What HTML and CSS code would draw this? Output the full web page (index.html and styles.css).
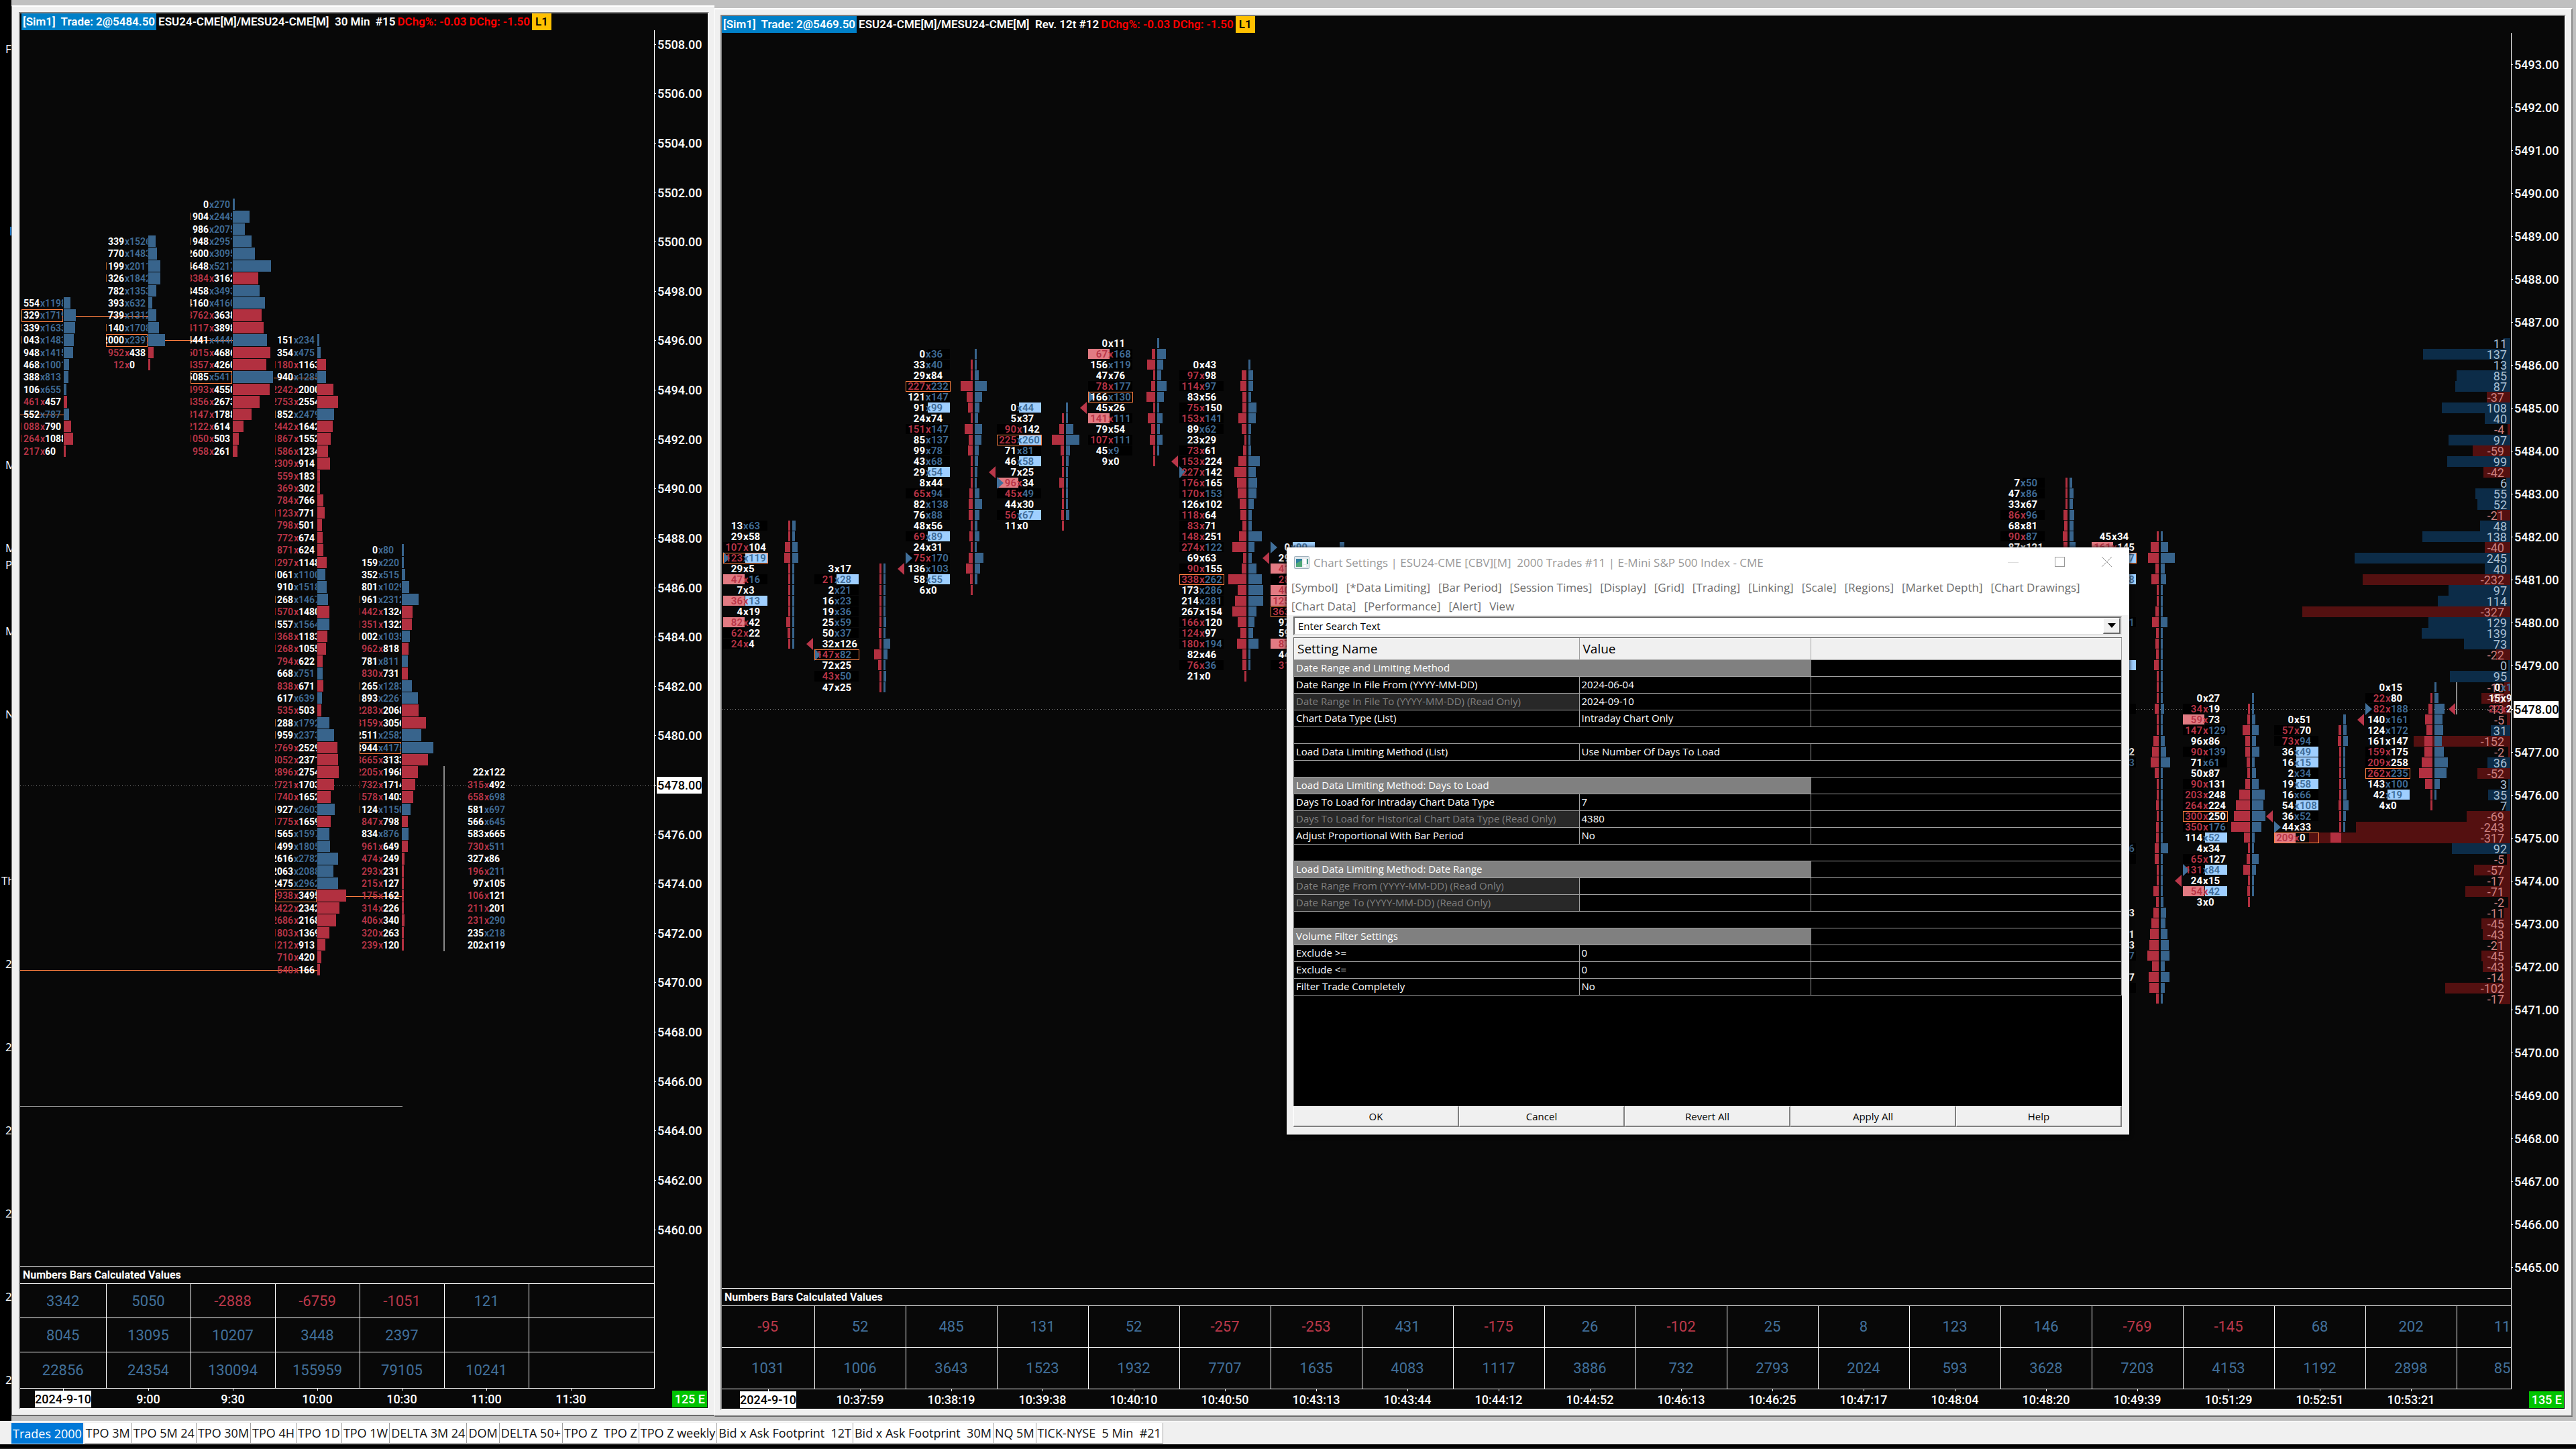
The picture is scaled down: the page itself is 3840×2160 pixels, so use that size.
FILE: index.html
```html
<!DOCTYPE html>
<html lang="en">
<head>
  <meta charset="UTF-8" />
  <title>Trades 2000</title>
  <link rel="stylesheet" href="styles.css">
</head>
<body>
  <main class="workspace">
    <ul class="desktop-strip">
      <li>F</li><li></li><li class="marked"></li><li></li><li></li>
      <li>M</li><li>M<br>P</li><li>M</li><li>N</li><li></li><li class="wide-label">Th</li>
      <li>2</li><li>2</li><li>2</li><li>2</li><li>2</li><li>2</li>
    </ul>

    <section class="chart-window left-window">
      <div class="chart">
        <header class="chart-header">
          <span class="position">[Sim1]&nbsp; Trade: 2@5484.50</span>
          <span class="symbol">ESU24-CME[M]/MESU24-CME[M]&nbsp; 30 Min&nbsp; #15</span>
          <span class="change">DChg%: -0.03 DChg: -1.50</span>
          <span class="level">L1</span>
        </header>
        <svg class="plot narrow" id="plot30"></svg>
        <div class="values">
          <h2>Numbers Bars Calculated Values</h2>
          <table id="values30"></table>
        </div>
        <footer class="times" id="times30"></footer>
      </div>
    </section>

    <section class="chart-window right-window">
      <div class="chart">
        <header class="chart-header">
          <span class="position">[Sim1]&nbsp; Trade: 2@5469.50</span>
          <span class="symbol">ESU24-CME[M]/MESU24-CME[M]&nbsp; Rev. 12t #12</span>
          <span class="change">DChg%: -0.03 DChg: -1.50</span>
          <span class="level">L1</span>
        </header>
        <svg class="plot wide" id="plot12t"></svg>
        <div class="values">
          <h2>Numbers Bars Calculated Values</h2>
          <table id="values12t"></table>
        </div>
        <footer class="times" id="times12t"></footer>
      </div>
    </section>
  </main>

  <nav class="tabs">
    <button class="active">Trades 2000</button>
    <button>TPO 3M</button>
    <button>TPO 5M 24</button>
    <button>TPO 30M</button>
    <button>TPO 4H</button>
    <button>TPO 1D</button>
    <button>TPO 1W</button>
    <button>DELTA 3M 24</button>
    <button>DOM</button>
    <button>DELTA 50+</button>
    <button>TPO Z&nbsp; TPO Z</button>
    <button>TPO Z weekly</button>
    <button>Bid x Ask Footprint&nbsp; 12T</button>
    <button>Bid x Ask Footprint&nbsp; 30M</button>
    <button>NQ 5M</button>
    <button>TICK-NYSE&nbsp; 5 Min&nbsp; #21</button>
  </nav>
  <div class="taskbar"></div>

  <section class="dialog" role="dialog" aria-labelledby="dialogTitle">
    <header class="dialog-title">
      <svg class="app-icon" viewBox="0 0 23 19" width="23" height="19">
        <rect x="0.5" y="0.5" width="22" height="18" rx="1" fill="#e4eaee" stroke="#9fb0bc" />
        <rect x="3" y="4" width="9" height="12" fill="#2e7fa0" />
        <path d="M3 16V11L12 6V16Z" fill="#4fa877" />
        <rect x="14" y="4" width="4" height="8" fill="#fff" />
        <rect x="14" y="13" width="4" height="3" fill="#fff" />
        <rect x="19" y="4" width="2" height="8" fill="#4a9b8a" />
      </svg>
      <h1 id="dialogTitle">Chart Settings | ESU24-CME [CBV][M]&nbsp; 2000 Trades #11 | E-Mini S&amp;P 500 Index - CME</h1>
      <div class="window-buttons">
        <button aria-label="Minimize"><svg width="16" height="16"><path d="M0 8.5H16" stroke="#ddd" /></svg></button>
        <button aria-label="Maximize"><svg width="16" height="16"><rect x="0.5" y="0.5" width="14" height="14" fill="none" stroke="#999" /></svg></button>
        <button aria-label="Close"><svg width="16" height="16"><path d="M0 0L15 15M15 0L0 15" stroke="#999" /></svg></button>
      </div>
    </header>
    <nav class="menu">
      <a href="#">[Symbol]</a>
      <a href="#">[*Data Limiting]</a>
      <a href="#">[Bar Period]</a>
      <a href="#">[Session Times]</a>
      <a href="#">[Display]</a>
      <a href="#">[Grid]</a>
      <a href="#">[Trading]</a>
      <a href="#">[Linking]</a>
      <a href="#">[Scale]</a>
      <a href="#">[Regions]</a>
      <a href="#">[Market Depth]</a>
      <a href="#">[Chart Drawings]</a>
      <a href="#">[Chart Data]</a>
      <a href="#">[Performance]</a>
      <a href="#">[Alert]</a>
      <a href="#">View</a>
    </nav>
    <div class="dialog-body">
      <div class="search">
        <select aria-label="Search settings">
          <option>Enter Search Text</option>
        </select>
        <span class="arrow"><svg width="12" height="7"><path d="M0 0H12L6 7Z" /></svg></span>
      </div>
      <div class="settings">
        <table>
          <colgroup><col class="name-col"><col class="value-col"><col></colgroup>
          <thead>
            <tr><th>Setting Name</th><th>Value</th><th></th></tr>
          </thead>
          <tbody>
            <tr class="group"><td colspan="2">Date Range and Limiting Method</td><td></td></tr>
            <tr><td>Date Range In File From (YYYY-MM-DD)</td><td>2024-06-04</td><td></td></tr>
            <tr class="readonly"><td>Date Range In File To (YYYY-MM-DD) (Read Only)</td><td>2024-09-10</td><td></td></tr>
            <tr><td>Chart Data Type (List)</td><td>Intraday Chart Only</td><td></td></tr>
            <tr><td colspan="3"></td></tr>
            <tr><td>Load Data Limiting Method (List)</td><td>Use Number Of Days To Load</td><td></td></tr>
            <tr><td colspan="3"></td></tr>
            <tr class="group"><td colspan="2">Load Data Limiting Method: Days to Load</td><td></td></tr>
            <tr><td>Days To Load for Intraday Chart Data Type</td><td>7</td><td></td></tr>
            <tr class="readonly"><td>Days To Load for Historical Chart Data Type (Read Only)</td><td>4380</td><td></td></tr>
            <tr><td>Adjust Proportional With Bar Period</td><td>No</td><td></td></tr>
            <tr><td colspan="3"></td></tr>
            <tr class="group"><td colspan="2">Load Data Limiting Method: Date Range</td><td></td></tr>
            <tr class="readonly"><td>Date Range From (YYYY-MM-DD) (Read Only)</td><td></td><td></td></tr>
            <tr class="readonly"><td>Date Range To (YYYY-MM-DD) (Read Only)</td><td></td><td></td></tr>
            <tr><td colspan="3"></td></tr>
            <tr class="group"><td colspan="2">Volume Filter Settings</td><td></td></tr>
            <tr><td>Exclude &gt;=</td><td>0</td><td></td></tr>
            <tr><td>Exclude &lt;=</td><td>0</td><td></td></tr>
            <tr><td>Filter Trade Completely</td><td>No</td><td></td></tr>
          </tbody>
        </table>
      </div>
      <div class="actions">
        <button>OK</button>
        <button>Cancel</button>
        <button>Revert All</button>
        <button>Apply All</button>
        <button>Help</button>
      </div>
    </div>
  </section>

  <script src="charts.js"></script>
</body>
</html>
```

FILE: styles.css
```css
* { box-sizing: border-box; }
body {
  margin: 0;
  height: 100vh;
  display: flex;
  flex-direction: column;
  overflow: hidden;
  background: #c0c0c0;
  font-family: Roboto, "Liberation Sans", sans-serif;
  font-size: 18px;
  color: #fff;
}
h1, h2, ul { margin: 0; padding: 0; font-weight: normal; }
button { font: inherit; border: 0; padding: 0; background: none; }

.workspace {
  flex: 1;
  min-height: 0;
  display: grid;
  grid-template-columns: 17px 1048fr 2770fr 5px;
}

/* desktop icon labels that show beside the windows */
.desktop-strip {
  background: #000;
  list-style: none;
  padding: 60px 0 0 0;
  overflow: hidden;
  font: 17px/25px "Open Sans", "Noto Sans", sans-serif;
}
.desktop-strip li { height: 124px; padding-left: 8px; }
.desktop-strip .wide-label { padding-left: 2px; }
.desktop-strip .marked { border-right: 2px solid #1673c5; height: 13px; margin: 30px 0 81px; }

.chart-window {
  background: #f0f0f0;
  border-top: 2px solid #fff;
  border-bottom: 2px solid #6a6a6a;
  padding: 8px;
  min-width: 0;
  min-height: 0;
}
.left-window { margin: 8px 0 7px; border-left: 1px solid #8a8a8a; padding-left: 10px; }
.right-window { margin: 12px 0 6px; border-left: 1px solid #fff; border-right: 2px solid #8a8a8a; }
.chart {
  height: 100%;
  border: 2px solid #fff;
  border-top-color: #808080;
  border-left-color: #808080;
  background: #080808;
  display: flex;
  flex-direction: column;
  overflow: hidden;
}
.chart-header {
  display: flex;
  gap: 3px;
  font-size: 17px;
  font-weight: 600;
  line-height: 25px;
  white-space: pre;
}
.left-window .chart-header { padding-left: 2px; }
.position { background: #0080c8; padding: 0 2px; }
.change { color: #f00; }
.level { background: #ffc000; color: #000; padding: 0 5px; }

.plot { flex: 1; min-height: 0; width: 100%; display: block; }
.plot text { font-weight: 700; fill: #fff; }
.narrow .cell { font-size: 14px; }
.wide .cell { font-size: 15px; }
.plot .axis { font-size: 18px; font-weight: 500; }
.plot .current { fill: #000; }
.plot .red { fill: #b83547; }
.plot .blue { fill: #406c96; }
.plot text.red, .plot text.blue { font-weight: 600; }
.bar-red { fill: #b23040; }
.bar-blue { fill: #38648c; }
.shade { fill: #000; }
.pink { fill: #e27b83; }
.light { fill: #9fcfff; }
.poc { fill: none; stroke: #ff8040; }
.ext { stroke: #ff8040; }
.open-line { stroke: #909090; }
.grid-dots { stroke: #7a7a7a; stroke-dasharray: 1 3; }
.axis-line { stroke: #fff; }
.last-bar { fill: #8a8a8a; }
.last-price { fill: #fff; }
.arrow-red { fill: #b9374a; }
.arrow-blue { fill: #41709b; }
.hist-up { fill: #0c2c48; }
.hist-down { fill: #541010; }
.plot .hist-text { font-size: 18px; font-weight: 400; fill: #a9bfd2; }
.plot .hist-text.down { fill: #cc8080; }

.values {
  width: calc(100% - 79px);
  border-top: 1px solid #fff;
  border-right: 1px solid #fff;
  overflow: hidden;
}
.values h2 {
  font-size: 16px;
  font-weight: 700;
  line-height: 25px;
  padding: 0 4px;
}
.values table { border-collapse: collapse; table-layout: fixed; width: 100%; }
.right-window .values table { width: max-content; }
.values td {
  width: 126px;
  height: 51px;
  padding: 0;
  border: 1px solid #fff;
  border-left: 0;
  text-align: center;
  font-size: 22px;
  color: #41709b;
}
.values td:first-child { width: 128px; }
.left-window .values td:last-child { width: auto; border-right: 0; }
.left-window .values tr:last-child td { height: 54px; }
.right-window .values td { width: 136px; height: 62px; }
.right-window .values td:first-child { width: 138px; }
.values td.down { color: #bb384a; }

.times {
  display: flex;
  height: 29px;
  font-weight: 500;
  white-space: nowrap;
}
.times span {
  width: 126px;
  flex: none;
  text-align: center;
  line-height: 25px;
}
.times span::before {
  content: "";
  display: block;
  width: 1px;
  height: 3px;
  margin: 0 auto;
  background: #fff;
}
.times span:first-child { width: 128px; }
.right-window .times span { width: 136px; }
.right-window .times span:first-child { width: 138px; }
.times mark { background: #fff; color: #000; display: inline-block; }
.times b {
  margin: 3px 1px 1px auto;
  background: #00c400;
  padding: 0 3px 0 4px;
  line-height: 25px;
  font-weight: 500;
}

.tabs {
  display: flex;
  height: 35px;
  padding: 2px 0 1px 17px;
  border-top: 1px solid #fff;
  background: #f0f0f0;
  font: 18px "Open Sans", "Noto Sans", sans-serif;
}
.tabs button {
  background: #fff;
  color: #111;
  padding: 0 2px;
  border-right: 1px solid #a0a0a0;
  border-bottom: 1px solid #a0a0a0;
  white-space: nowrap;
}
.tabs .active { background: #0078d7; color: #fff; margin-right: 2px; border: 0; }
.taskbar { height: 7px; background: #000; border-bottom: 2px solid #222; }

.dialog {
  position: absolute;
  left: 1918px;
  top: 816px;
  width: 1256px;
  height: 876px;
  display: flex;
  flex-direction: column;
  background: #fff;
  border-bottom: 1px solid #555;
  box-shadow: 0 0 6px #000;
  color: #000;
  font-family: "Open Sans", "Noto Sans", sans-serif;
}
.dialog-title {
  display: flex;
  align-items: center;
  gap: 6px;
  height: 44px;
  padding: 0 11px;
}
.dialog-title h1 { font-size: 17px; color: #999; flex: 1; }
.window-buttons { display: flex; padding-right: 14px; gap: 54px; }
.window-buttons button { display: flex; }
.menu {
  display: flex;
  flex-wrap: wrap;
  column-gap: 12px;
  padding: 2px 8px 0 7px;
  height: 57px;
}
.menu a {
  color: #6d6d6d;
  text-decoration: none;
  font-size: 17px;
  line-height: 28px;
}
.dialog-body {
  flex: 1;
  display: flex;
  flex-direction: column;
  background: #f0f0f0;
  padding: 2px 11px 11px 10px;
}
.search {
  display: flex;
  height: 28px;
  margin-bottom: 3px;
  background: #fff;
  border: 2px solid #696969;
  border-right-color: #e3e3e3;
  border-bottom-color: #e3e3e3;
}
.search select {
  appearance: none;
  flex: 1;
  border: 0;
  background: none;
  padding: 0 5px;
  font: 15px "Open Sans", sans-serif;
  color: #000;
}
.arrow {
  width: 26px;
  display: flex;
  align-items: center;
  justify-content: center;
  background: #f0f0f0;
  border: 1px solid #fff;
  border-right: 2px solid #696969;
  border-bottom: 2px solid #696969;
}
.settings {
  flex: 1;
  background: #000;
  border-top: 1px solid #696969;
  border-left: 1px solid #696969;
}
.settings table { width: 100%; border-collapse: collapse; table-layout: fixed; }
.name-col { width: 425px; }
.value-col { width: 345px; }
.settings th {
  height: 32px;
  padding: 0 5px;
  background: #f0f0f0;
  color: #000;
  text-align: left;
  font-size: 19px;
  font-weight: 400;
  line-height: 30px;
  border-right: 1px solid #a0a0a0;
  border-bottom: 1px solid #a0a0a0;
}
.settings td {
  height: 25px;
  padding: 0 3px;
  color: #fff;
  font-size: 15px;
  line-height: 23px;
  white-space: nowrap;
  border-bottom: 1px solid #a0a0a0;
  border-right: 1px solid #a0a0a0;
}
.settings .group td:first-child { background: #808080; border-right-color: #808080; }
.settings .readonly td:first-child { background: #282828; color: #808080; }
.actions { display: grid; grid-template-columns: repeat(5, 1fr); height: 31px; }
.actions button {
  font-size: 15px;
  color: #000;
  border: 1px solid #fff;
  border-right: 2px solid #808080;
  border-bottom: 2px solid #808080;
}
```

FILE: charts.js
```javascript
// Cell format: bid[r|p] x ask[b|l][*]
// r = red bid, p = pink highlight, b = blue ask, l = light highlight, * = point of control
const chart30 = {
  plot: 'plot30', base: 5478, baseY: 1125, perPoint: 36.81, tick: 0.5, labels: [5460, 5508, 2],
  step: 126, cellWidth: 62, mid: 27, xAt: 28, askAt: 35, drop: 5,
  bars: [
    { top: 5497.5, rows: '554x1198b 1329x1719b* 1339x1633b 1043x1483b 948x1415b 468x1001b 388x813b 106x655b 461rx457 552x787b 1088rx790 1264rx1088 217rx60' },
    { top: 5500, rows: '339x1526b 770x1483b 1199x2011b 1326x1842b 782x1353b 393x632b 739x1312b 1140x1708b 2000x2397b* 952rx438 12rx0' },
    { top: 5501.5, rows: '0x270b 1904x2445b 986x2075b 1948x2951b 2600x3095b 4648x5217b 3384rx3162 3458x3493b 4160x4160b 3762rx3638 4117rx3898 4441x4446b 5015rx4686 4357rx4260 5085x5411b* 4993rx4550 4356rx2673 3147rx1788 2122rx614 1050rx503 958rx261' },
    { top: 5496, rows: '151x234b 354x475b 1180rx1163 940x1285b 2242rx2000 2753rx2554 1852x2479b 2442rx1642 1867rx1552 1586rx1234 2309rx914 559rx183 369rx302 784rx766 1123rx771 798rx501 772rx674 871rx624 1297rx1148 1061x1100b 910x1518b 1268x1467b 1570rx1480 1557x1564b 1368rx1183 1268rx1055 794rx622 668x751b 838rx671 617x639b 535rx503 1288x1792b 1959x2373b 2769rx2529 3052rx2371 2896rx2754 2721rx1703 1740rx1652 1927x2603b 1775rx1659 1565x1597b 1499x1805b 2616x2782b 2063x2088b 2475x2962b 3938rx3495* 3422rx2342 2686rx2168 1803rx1369 1212rx913 710rx420 540rx166' },
    { top: 5487.5, rows: '0x80b 159x220b 352x515b 801x1029b 1961x2312b 1442rx1324 1351rx1322 1002x1035b 962rx818 781x811b 830rx731 1265x1283b 1893x2261b 2283rx2068 3159rx3056 2511x2582b 3944x4175b* 3665rx3133 2205rx1968 1732rx1714 1578rx1403 1124x1150b 847rx798 834x876b 961rx649 474rx249 293rx231 215rx127 175rx162 314rx226 406rx340 320rx263 239rx120' },
    { top: 5478.5, live: true, height: 15, rows: '22x122 315rx492 658rx698b 581x697b 566x645b 583x665 730rx511b 327x86 196rx211b 97x105 106rx121 211rx201 231rx290b 235x218b 202x119' }
  ],
  extensions: [[5497, 82, 191], [5496, 216, 317], [5494.5, 378, 443], [5493, 0, 65], [5473.5, 486, 569], [5470.5, 0, 443]],
  openLine: [1604, 0, 570],
  values: [
    [3342, 5050, -2888, -6759, -1051, 121, ''],
    [8045, 13095, 10207, 3448, 2397, '', ''],
    [22856, 24354, 130094, 155959, 79105, 10241, '']
  ],
  times: ['2024-9-10', '9:00', '9:30', '10:00', '10:30', '11:00', '11:30'],
  countdown: '125 E'
};

const chart12t = {
  plot: 'plot12t', base: 5486, baseY: 495, perPoint: 64.07, tick: 0.25, labels: [5465, 5493, 1],
  step: 136, cellWidth: 66, mid: 29, xAt: 30, askAt: 38, drop: 5, split: true,
  bars: [
    { top: 5482.25, up: 3, rows: '13x63b 29x58 107rx104 123rx119l* 29x5 47px16b 7x3 36px13l 4x19 82px42 62rx22 24rx4' },
    { top: 5481.25, up: 8, down: 7, rows: '3x17 21rx28l 2x21b 16x23b 19x36b 25x59b 50x37b 32x126 147rx82b* 72x25 43rx50b 47x25' },
    { top: 5486.25, up: 19, down: 20, rows: '0x36b 33x40b 29x84 227rx232b* 121x147b 91x99l 24x74 151rx147b 85x137b 99x78b 43x68b 29x54l 8x44 65rx94b 82x138b 76x88b 48x56 69rx89l 24x31 75rx170b 136x103b 58x55l 6x0' },
    { top: 5485, up: 7, down: 6, rows: '0x44l 5x37 90rx142 225rx260l* 71x81b 46x58l 7x25 96px34 45rx49b 44x30 56rx67l 11x0' },
    { top: 5486.5, up: 5, down: 6, rows: '0x11 67px168b 156x119b 47x76 78rx177b 166x130b* 45x26 141px111b 79x54 107rx111b 45x9b 9x0' },
    { top: 5486, up: 10, down: 9, rows: '0x43 97rx98 114rx97b 83x56 75rx150 153rx141b 89x62b 23x29 73rx61 153rx224 227rx142 176rx165 170rx153b 126x102 118rx64 83rx71 148rx251 274rx122b 69x63 90rx155 338rx262b* 173x286b 214x281b 267x154 166rx120 124rx97 180rx194b 82x46 76rx36b 21x0' },
    { top: 5481.75, up: 0, down: 1, rows: '0x90l 29x40 41px22 28rx30 40px31 125px60 363rx90* 97x80 59x70 87px44 44x30 31rx0' },
    null, null, null, null, null, null, null,
    { top: 5483.25, rows: '7x50b 47x86b 33x67 86rx96b 68x81 90rx87b 87x121' },
    { top: 5482, rows: '45x34 161px145 205rx267l* 65x78 140rx108l 30x20 30x20 65x30 130rx131b 55x20 65x30 55x20 90x40l 30x20 30x20 30x20 78x65b 30x20 30x20 103x78 128x102 153x183b 78x30 30x20 30x20 52x20 30x20 52x20 52x20 78x146b 78x30b 30x20 30x20 103x30 52x52 103x103 140x90 165x131 178x153 215x167b 128x78 190x167 178x80b 52x20' },
    { top: 5478.25, up: 16, down: 17, rows: '0x27 34rx19 59px73 147rx129b 96x86 90rx139b 71x61b 50x87 90rx131 203rx248 264rx224 300rx250* 350rx176b 114x52l 4x34 65rx127 131rx84l 24x15 54px42l 3x0' },
    { top: 5477.75, up: 10, down: 9, rows: '0x51 57rx70 73rx94b 36x49l 16x15l 2x34b 19x58l 16x66b 54x108l 36x52b 44x33 209px0*' },
    { top: 5478.5, up: 2, down: 3, rows: '0x15 22rx80 82rx188b 140x161b 124x172b 161x147 159rx175 209rx258 262rx235b* 143x100b 42x19l 4x0' },
    { top: 5478.5, live: true, height: 3, down: 2, rows: '0x19b 15x96 22rx28' }
  ],
  histTop: 5486.5,
  hist: [11, 137, 13, 85, 87, -37, 108, 40, -4, 97, -59, 99, -42, 6, 55, 52, -21, 48, 138, -40, 245, 40, -232, 97, 114, -327, 129, 139, 73, -22, 0, 95, -10, -45, -13, -5, 31, -152, -2, 36, -52, 3, 35, 7, -69, -243, -317, 92, -5, -57, -17, -71, -2, -11, -45, -43, -21, -45, -43, -14, -102, -17],
  values: [
    [-95, 52, 485, 131, 52, -257, -253, 431, -175, 26, -102, 25, 8, 123, 146, -769, -145, 68, 202, 11],
    [1031, 1006, 3643, 1523, 1932, 7707, 1635, 4083, 1117, 3886, 732, 2793, 2024, 593, 3628, 7203, 4153, 1192, 2898, 85]
  ],
  times: ['2024-9-10', '10:37:59', '10:38:19', '10:39:38', '10:40:10', '10:40:50', '10:43:13', '10:43:44', '10:44:12', '10:44:52', '10:46:13', '10:46:25', '10:47:17', '10:48:04', '10:48:20', '10:49:39', '10:51:29', '10:52:51', '10:53:21'],
  countdown: '135 E'
};

const LAST = 5478;

function rect(cls, x, y, w, h) {
  return `<rect class="${cls}" x="${x}" y="${y}" width="${w}" height="${h}"/>`;
}

function line(cls, x1, y, x2) {
  return `<line class="${cls}" x1="${x1}" y1="${y + 0.5}" x2="${x2}" y2="${y + 0.5}"/>`;
}

function label(cls, x, y, text, anchor = 'start') {
  return `<text class="${cls}" x="${x}" y="${y}" text-anchor="${anchor}">${text}</text>`;
}

function drawBar(chart, bar, index, yOf) {
  const left = 2 + index * chart.step;
  const textLeft = bar.live ? left + (chart.split ? 36 : 32) : left;
  const profile = left + 63;
  const half = chart.tick * chart.perPoint / 2;
  let back = '', text = '';

  bar.rows.split(' ').forEach((row, i) => {
    const [, bid, bidMark, ask, askMark, poc] = row.match(/^(\d+)([rp]?)x(\d+)([bl]?)(\*?)$/);
    const price = bar.top - i * chart.tick;
    const y = Math.round(yOf(price) - half);
    const h = Math.round(yOf(price) + half) - y - 1;
    const base = y + Math.round(h / 2) + chart.drop;

    if (chart.split && !bar.live) {
      const bidW = Math.max(3, Math.floor(bid * 0.08));
      const askW = Math.max(3, Math.floor(ask * 0.08));
      if (bidMark) back += rect(bidMark === 'p' ? 'pink' : 'shade', left, y, 32, h);
      if (askMark) back += rect(askMark === 'l' ? 'light' : 'shade', left + 33, y, 33, h);
      if (+bid) back += rect('bar-red', left + 100 - bidW, y, bidW, h);
      if (+ask) back += rect('bar-blue', left + 103, y, askW, h);
    } else if (!bar.live) {
      const w = Math.max(3, Math.round((+bid + +ask) * 0.00575));
      back += rect(bidMark ? 'bar-red' : 'bar-blue', profile, y, w, h);
    }

    const cy = y + 8;
    if (bar.down === i) back += `<path class="arrow-red" d="M${left - 2} ${cy - 9}V${cy + 9}L${left - 12} ${cy}Z"/>`;
    if (bar.up === i) back += `<path class="arrow-blue" d="M${left} ${cy - 9}V${cy + 9}L${left + 10} ${cy}Z"/>`;
    if (poc) back += `<rect class="poc" x="${left + 0.5}" y="${y + 0.5}" width="${chart.cellWidth - (chart.split ? 0 : 1)}" height="${h}"/>`;

    const bidCls = bidMark ? 'cell red' : 'cell';
    const askCls = askMark ? 'cell blue' : 'cell';
    const xCls = bidMark === 'p' || (bidMark && askMark !== 'l') ? 'cell red' : askCls;
    text += label(bidCls, chart.mid, base, bid, 'end') + label(xCls, chart.xAt, base, 'x') + label(askCls, chart.askAt, base, ask);
  });

  if (bar.live) {
    const y = Math.round(yOf(bar.top) - half);
    back += rect('last-bar', left - 1, y, 2, Math.round(bar.height * half * 2));
  }
  return back + `<svg x="${textLeft}" y="0" width="${chart.cellWidth}" height="100%">${text}</svg>`;
}

function drawHist(chart, width, yOf) {
  const half = chart.tick * chart.perPoint / 2;
  return chart.hist.map((v, i) => {
    const price = chart.histTop - i * chart.tick;
    const y = Math.round(yOf(price) - half);
    const h = Math.round(yOf(price) + half) - y;
    const w = Math.max(3, Math.round(Math.abs(v) * 0.947));
    const down = v < 0;
    return rect(down ? 'hist-down' : 'hist-up', width - 1 - w, y, w, h) +
      label(down ? 'hist-text down' : 'hist-text', width - (down ? 10 : 6), y + 15, v, 'end');
  }).join('');
}

function drawPlot(chart) {
  const svg = document.getElementById(chart.plot);
  const width = svg.clientWidth - 80;
  const yOf = price => chart.baseY + (chart.base - price) * chart.perPoint;
  const lastY = Math.round(yOf(LAST));
  let inner = '';

  if (chart.hist) inner += drawHist(chart, width, yOf);
  inner += line('grid-dots', 0, lastY, width);
  (chart.extensions || []).forEach(([price, x1, x2]) => {
    inner += line('ext', x1, Math.round(yOf(price)), x2);
  });
  if (chart.openLine) inner += line('open-line', chart.openLine[1], chart.openLine[0], chart.openLine[2]);
  chart.bars.forEach((bar, i) => {
    if (bar) inner += drawBar(chart, bar, i, yOf);
  });

  let axis = `<line class="axis-line" x1="${width + 0.5}" y1="0" x2="${width + 0.5}" y2="100%"/>`;
  const [low, high, step] = chart.labels;
  for (let p = low; p <= high; p += step) {
    const y = Math.round(yOf(p));
    axis += line('axis-line', width, y, width + 3);
    if (p === LAST) axis += rect('last-price', width + 4, y - 12, 67, 25);
    axis += label(p === LAST ? 'axis current' : 'axis', width + 5, y + 7, p.toFixed(2));
  }
  svg.innerHTML = `<svg width="${width}" height="100%">${inner}</svg>` + axis;
}

function fillTable(id, rows) {
  document.getElementById(id).innerHTML = rows.map(row =>
    '<tr>' + row.map(v => `<td class="${v < 0 ? 'down' : 'up'}">${v}</td>`).join('') + '</tr>').join('');
}

function fillTimes(id, times, countdown) {
  document.getElementById(id).innerHTML =
    times.map((t, i) => `<span>${i ? t : `<mark>${t}</mark>`}</span>`).join('') + `<b>${countdown}</b>`;
}

fillTable('values30', chart30.values);
fillTable('values12t', chart12t.values);
fillTimes('times30', chart30.times, chart30.countdown);
fillTimes('times12t', chart12t.times, chart12t.countdown);
drawPlot(chart30);
drawPlot(chart12t);
```
